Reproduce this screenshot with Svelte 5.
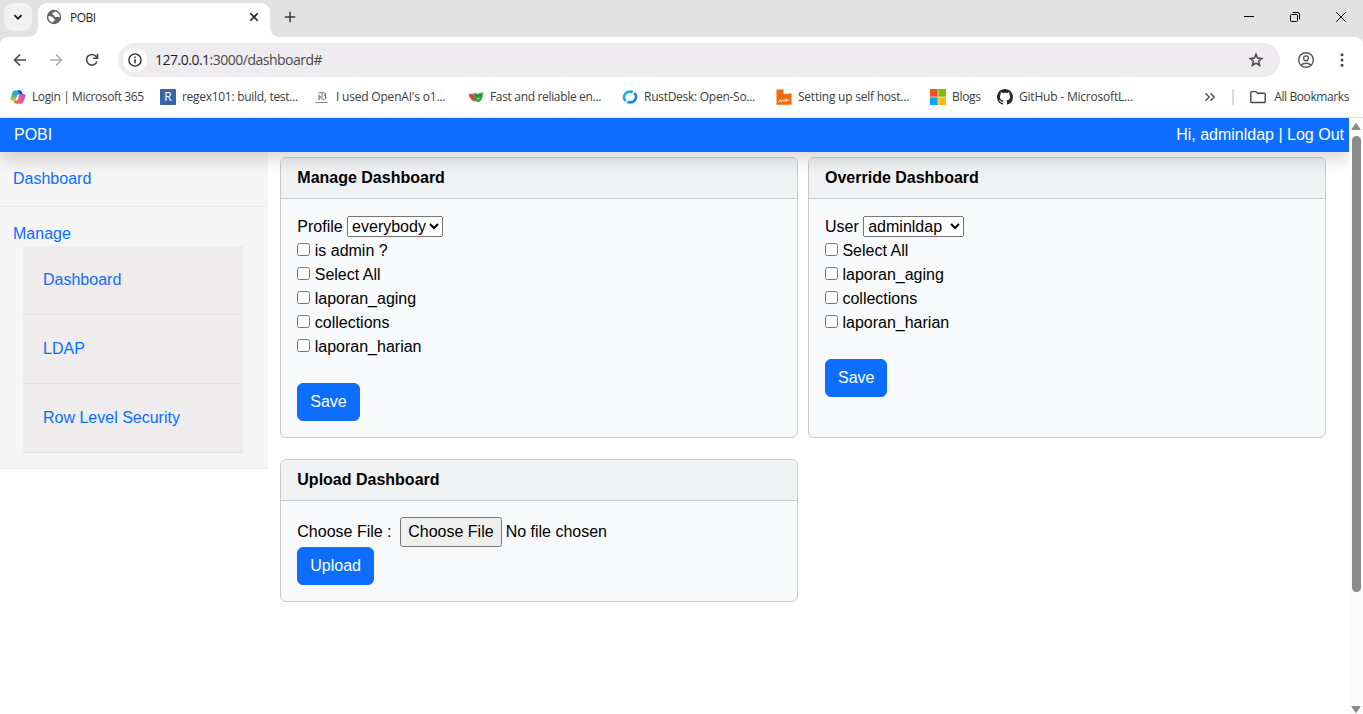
<script>
  const bookmarks = [
    { icon: 'copilot', label: 'Login | Microsoft 365', width: 150, spacing: -0.39 },
    { icon: 'regex', label: 'regex101: build, test...', width: 154, spacing: -0.29 },
    { icon: 'medium', label: "I used OpenAI's o1...", width: 154, spacing: -0.2 },
    { icon: 'masks', label: 'Fast and reliable en...', width: 154, spacing: -0.33 },
    { icon: 'rustdesk', label: 'RustDesk: Open-So...', width: 154, spacing: -0.27 },
    { icon: 'orange', label: 'Setting up self host...', width: 154, spacing: -0.23 },
    { icon: 'microsoft', label: 'Blogs', width: 67, spacing: -0.3 },
    { icon: 'github', label: 'GitHub - MicrosoftL...', width: 160, spacing: -0.2 }
  ];
  const submenu = ['Dashboard', 'LDAP', 'Row Level Security'];
  const profileOptions = ['is admin ?', 'Select All', 'laporan_aging', 'collections', 'laporan_harian'];
  const userOptions = ['Select All', 'laporan_aging', 'collections', 'laporan_harian'];
</script>

<div class="window">
  <header class="chrome">
    <div class="tabstrip">
      <button class="tabsearch" aria-label="Search tabs">
        <svg width="28" height="28" viewBox="0 0 28 28"><path d="M10.400 12.200l3.600 3.500 3.600-3.500" fill="none" stroke="#1f1f1f" stroke-width="1.800" /></svg>
      </button>
      <div class="tab">
        <svg class="globe" width="16" height="16" viewBox="0 0 16 16">
          <circle cx="8" cy="8" r="7.200" fill="#5f6368" />
          <path d="M9.300 2.200c-.4 1.300-2.700 1.200-3 2.500-.2 1.100.9 1.300 1.600 1.500.8.300.4 1.600 1.400 1.900.9.200 1.500-.7 2.600-.4.800.2 1 .8 1.900.8 0-3.200-1.700-5.400-4.500-6.300z" fill="#fff" />
          <path d="M2.200 7.300c1.600-.1 3.400-.1 4.500.7.8.7.5 1.500 1.400 1.800 1.100.4 1 1.200.4 1.900-.6.600-1.500.4-1.700 1.900-2.900-.8-4.700-3.200-4.600-6.300z" fill="#fff" />
        </svg>
        <span class="tabtitle">POBI</span>
        <svg class="tabclose" width="16" height="16" viewBox="0 0 16 16"><path d="M4.300 4.300l7.400 7.400M11.700 4.300l-7.400 7.400" stroke="#1f1f1f" stroke-width="1.600" /></svg>
      </div>
      <svg class="newtab" width="14" height="14" viewBox="0 0 14 14"><path d="M7 1.800v10.400M1.800 7h10.400" stroke="#3c3c3c" stroke-width="1.500" /></svg>
      <div class="winctl">
        <svg width="46" height="34" viewBox="0 0 46 34"><path d="M18 16.500h10" stroke="#000" /></svg>
        <svg width="46" height="34" viewBox="0 0 46 34" fill="none" stroke="#000"><rect x="18.500" y="14.500" width="7" height="7" rx="1.200" /><path d="M20.500 12.500h5.200a1.800 1.800 0 0 1 1.800 1.800v5.200" /></svg>
        <svg width="46" height="34" viewBox="0 0 46 34"><path d="M18.200 12.200l9.600 9.600M27.800 12.200l-9.600 9.600" stroke="#000" /></svg>
      </div>
    </div>

    <div class="toolbar">
      <svg class="nav" width="36" height="34" viewBox="0 0 36 34" fill="none" stroke="#474747" stroke-width="1.600"><path d="M26 17H15M20 11.500L14.500 17l5.500 5.500" /></svg>
      <svg class="nav" width="36" height="34" viewBox="0 0 36 34" fill="none" stroke="#ababab" stroke-width="1.600"><path d="M14 17h11M20 11.500l5.500 5.500-5.500 5.500" /></svg>
      <svg class="nav" width="36" height="34" viewBox="0 0 36 34" fill="none" stroke="#474747" stroke-width="1.600"><path d="M24.900 18.400a5.300 5.300 0 1 1-1.200-5.300l1.500 1.500" /><path d="M25.500 10.800v4.400h-4.400" /></svg>
      <div class="omnibox">
        <div class="info">
          <svg width="14" height="14" viewBox="0 0 14 14"><circle cx="7" cy="7" r="6.100" fill="none" stroke="#2c2c2c" stroke-width="1.400" /><path d="M7 6.200v4M7 3.600v1.500" stroke="#2c2c2c" stroke-width="1.500" /></svg>
        </div>
        <span class="url"><b>127.0.0.1</b>:3000/dashboard#</span>
        <svg class="star" width="16" height="16" viewBox="0 0 16 16"><path d="M8 2.200l1.600 3.900 4.200.4-3.200 2.800 1 4.100L8 11.200l-3.600 2.200 1-4.100-3.200-2.800 4.200-.4z" fill="none" stroke="#474747" stroke-width="1.500" /></svg>
      </div>
      <svg class="avatar" width="18" height="18" viewBox="0 0 18 18" fill="none" stroke="#5a5a5a" stroke-width="1.400"><circle cx="9" cy="9" r="7.300" /><circle cx="9" cy="7.300" r="2.400" /><path d="M3.900 14.100c2.800-2.500 7.400-2.500 10.200 0" /></svg>
      <svg class="dots" width="4" height="16" viewBox="0 0 4 16" fill="#474747"><circle cx="2" cy="2.700" r="1.500" /><circle cx="2" cy="8" r="1.500" /><circle cx="2" cy="13.300" r="1.500" /></svg>
    </div>

    <div class="bookmarks">
      {#each bookmarks as b}
        <div class="bookmark" style="width: {b.width}px; letter-spacing: {b.spacing}px">
          <svg width="16" height="16" viewBox="0 0 16 16">
            {#if b.icon === 'copilot'}
              <defs>
                <linearGradient id="cpA" x1="0" y1="0" x2="0" y2="1"><stop offset="0" stop-color="#19a5e8" /><stop offset=".5" stop-color="#3cb6a0" /><stop offset="1" stop-color="#f5c324" /></linearGradient>
                <linearGradient id="cpB" x1="1" y1="0" x2="0" y2="1"><stop offset="0" stop-color="#a54ce0" /><stop offset=".5" stop-color="#ee5a98" /><stop offset="1" stop-color="#fb6a3a" /></linearGradient>
              </defs>
              <path d="M4.700 1.500h5.200c1.200 0 1.600.8 2 2l.5 1.500h-2.200c-1 0-1.500.6-1.800 1.500l-1.300 4c-.3 1-.9 1.500-2 1.500H2.500C.8 12 .2 10.800.7 9l1.700-5.500c.4-1.300 1.200-2 2.300-2z" fill="url(#cpA)" />
              <path d="M7.500 1.500h2.400c1.200 0 1.600.8 2 2l.5 1.500H9.500z" fill="#1748d8" />
              <path d="M11.300 14.700H6.100c-1.200 0-1.600-.8-2-2L3.600 12h1.800c1 0 1.700-.5 2-1.500l1.300-4C9 5.500 9.500 5 10.500 5h3c1.700 0 2.300 1.200 1.800 2.700l-1.700 5c-.4 1.300-1.200 2-2.300 2z" fill="url(#cpB)" />
              <path d="M7.400 6l1.900-.4-1.700 5.200-2 .2z" fill="#fff" />
            {:else if b.icon === 'regex'}
              <rect width="16" height="16" rx=".8" fill="#3467a8" />
              <text x="4.200" y="12.300" font-size="12" fill="#fff" font-family="Open Sans, sans-serif">R</text>
            {:else if b.icon === 'medium'}
              <path d="M1.500 13.500h12" stroke="#8a8a8a" />
              <path d="M4.500 4l4-.8M5 5.500v5.200M5 7.500c1.500-.8 2 .2 1.500 1.200S5 10.500 4 10.500M8.500 4c3-.8 3.500.8 1.500 2.500M8 4v7M10 6.500c3 0 2.500 4-1 4.200M11.500 4v6" fill="none" stroke="#666" stroke-width=".9" />
            {:else if b.icon === 'masks'}
              <path d="M.8 4.500c2 .7 4 .7 7.200-.2v8c-1.600.2-3.500-.4-4.600-1.800C1.700 9 .8 6.500.8 4.500z" fill="#d65348" />
              <path d="M6.200 4.300c3 .8 5.800.3 8.600-1 .4 3.500-.3 6.400-2.100 8.400-1.500 1.600-3.600 1.700-4.900.4C6.400 10.700 5.900 7.300 6.200 4.300z" fill="#2fa43a" />
              <path d="M8.300 9.200c1.500.5 2.700.2 3.900-.7-.4 1.700-3.100 2.400-3.900.7z" fill="#d5efd6" />
              <path d="M7.700 6.900l1.600-.3M11.300 6.200l1.500-.5" stroke="#16611f" />
              <path d="M2.500 7l1.600.1M3.900 9.700l1.600-.9" stroke="#8d2b23" />
            {:else if b.icon === 'rustdesk'}
              <path d="M3.700 12.100A5.500 5.500 0 0 1 9 2.900" fill="none" stroke="#14b0f5" stroke-width="2.500" />
              <path d="M12.300 3.900A5.500 5.500 0 0 1 7 13.100" fill="none" stroke="#0a7df2" stroke-width="2.500" />
              <path d="M8 1.200l3.600.9-2.200 2.700zM8 14.800l-3.600-.9 2.200-2.700z" fill="#1296f4" />
            {:else if b.icon === 'orange'}
              <path d="M.5.500h7v4.800l8-1.100v11.500H.5z" fill="#f76707" />
              <path d="M2 13.500l2.200-2.800.8 2.500 1.700-2.500 1 2.300L10 9.500l.2 3 2.100-2 1 1.500" fill="none" stroke="#fff" stroke-width=".8" />
            {:else if b.icon === 'microsoft'}
              <rect width="7.700" height="7.700" fill="#f35325" /><rect x="8.300" width="7.700" height="7.700" fill="#81bc06" /><rect y="8.300" width="7.700" height="7.700" fill="#05a6f0" /><rect x="8.300" y="8.300" width="7.700" height="7.700" fill="#ffba08" />
            {:else}
              <path fill="#24292f" d="M8 0C3.580 0 0 3.580 0 8c0 3.540 2.290 6.530 5.470 7.590.4.070.55-.17.55-.38 0-.19-.01-.82-.01-1.490-2.010.37-2.530-.49-2.690-.94-.09-.23-.48-.94-.82-1.130-.28-.15-.68-.52-.01-.53.63-.01 1.080.58 1.230.82.72 1.210 1.870.87 2.330.66.07-.52.28-.87.51-1.070-1.780-.2-3.640-.89-3.640-3.950 0-.87.31-1.590.82-2.150-.08-.2-.36-1.020.08-2.120 0 0 .67-.21 2.200.82.64-.18 1.320-.27 2-.27s1.360.09 2 .27c1.530-1.040 2.200-.82 2.200-.82.44 1.100.16 1.920.08 2.120.51.56.82 1.270.82 2.150 0 3.070-1.870 3.750-3.650 3.950.29.25.54.73.54 1.480 0 1.070-.01 1.930-.01 2.200 0 .21.15.46.55.38A8.010 8.010 0 0 0 16 8c0-4.420-3.580-8-8-8z" />
            {/if}
          </svg>
          <span>{b.label}</span>
        </div>
      {/each}
      <div class="allmarks">
        <svg width="12" height="12" viewBox="0 0 12 12" fill="none" stroke="#474747" stroke-width="1.300"><path d="M1.500 2.300L5.200 6 1.500 9.700M6.500 2.300L10.200 6 6.500 9.700" /></svg>
        <i class="sep"></i>
        <svg width="16" height="16" viewBox="0 0 16 16" fill="none" stroke="#474747" stroke-width="1.400"><path d="M.8 3.400c0-.5.300-.8.800-.8h4.200l1.700 1.700h6.900c.5 0 .8.300.8.800v7.600c0 .5-.3.800-.8.800H1.600c-.5 0-.8-.3-.8-.8z" /></svg>
        <span>All Bookmarks</span>
      </div>
    </div>
  </header>

  <div class="viewport">
    <div class="page">
      <nav class="topbar">
        <span>POBI</span>
        <span>Hi, adminldap | Log Out</span>
      </nav>
      <div class="content">
        <ul class="sidebar">
          <li><a href="#top">Dashboard</a></li>
          <li>
            <a href="#top">Manage</a>
            <ul>
              {#each submenu as item}<li><a href="#top">{item}</a></li>{/each}
            </ul>
          </li>
        </ul>
        <main>
          <section class="card">
            <h6>Manage Dashboard</h6>
            <div class="body">
              <div class="row">Profile <select><option>everybody</option></select></div>
              {#each profileOptions as o}<label class="row"><input type="checkbox" /> {o}</label>{/each}
              <button class="btn spaced">Save</button>
            </div>
          </section>
          <section class="card">
            <h6>Override Dashboard</h6>
            <div class="body">
              <div class="row">User <select class="user"><option>adminldap</option></select></div>
              {#each userOptions as o}<label class="row"><input type="checkbox" /> {o}</label>{/each}
              <button class="btn spaced">Save</button>
            </div>
          </section>
          <section class="card">
            <h6>Upload Dashboard</h6>
            <div class="body">
              <div class="filerow"><span>Choose File :</span><input type="file" /></div>
              <button class="btn">Upload</button>
            </div>
          </section>
        </main>
      </div>
    </div>
    <div class="scrollbar">
      <svg width="10" height="7" viewBox="0 0 10 7"><path d="M5 .4L9.200 6.500H.8z" fill="#8b8b8b" stroke="#8b8b8b" stroke-linejoin="round" /></svg>
      <div class="thumb"></div>
      <svg class="down" width="10" height="7" viewBox="0 0 10 7"><path d="M5 6.500L9.200.5H.8z" fill="#8b8b8b" stroke="#8b8b8b" stroke-linejoin="round" /></svg>
    </div>
  </div>
</div>

<style>
  :global(body) { margin: 0; overflow: hidden; }
  * { box-sizing: border-box; }
  svg { display: block; flex: none; }
  .window { width: 1363px; height: 714px; display: flex; flex-direction: column; overflow: hidden; background: #fff; }
  .chrome { flex: none; height: 118px; background: #e2e2e2; font: 12px/16px 'Open Sans', sans-serif; color: #3c3c3c; border-bottom: 1px solid #dfe1e5; }
  .tabstrip { height: 37px; display: flex; align-items: flex-start; padding: 3px 0 0 4px; }
  .tabsearch { width: 28px; height: 28px; padding: 0; border: 0; border-radius: 9px; background: #f1f1f1; }
  .tab { position: relative; width: 232px; height: 34px; margin-left: 6px; padding: 0 8px 6px; display: flex; align-items: center; background: #fff; border-radius: 9px 9px 0 0; }
  .tab::before, .tab::after { content: ''; position: absolute; bottom: 0; width: 9px; height: 9px; }
  .tab::before { left: -9px; background: radial-gradient(circle at 0 0, transparent 8.500px, #fff 9px); }
  .tab::after { right: -9px; background: radial-gradient(circle at 100% 0, transparent 8.500px, #fff 9px); }
  .tabtitle { margin: 1px 0 0 8px; color: #1f1f1f; letter-spacing: -0.500px; }
  .tabclose { margin-left: auto; }
  .newtab { margin: 7px 0 0 13px; }
  .winctl { margin: -3px -1px 0 auto; display: flex; }
  .toolbar { height: 46px; display: flex; align-items: center; background: #fff; border-radius: 8px 8px 0 0; }
  .omnibox { width: 1162px; height: 34px; margin-left: 10px; display: flex; align-items: center; border-radius: 17px; background: #eeecee; padding: 0 16px 0 5px; }
  .info { width: 24px; height: 24px; border-radius: 50%; background: #fff; display: flex; align-items: center; justify-content: center; }
  .url { margin-left: 8px; font-size: 14px; line-height: 20px; letter-spacing: -0.500px; color: #4a4a4a; }
  .url b { font-weight: 400; color: #1f1f1f; }
  .star { margin-left: auto; }
  .avatar { margin-left: 17px; }
  .dots { margin-left: 25px; }
  .bookmarks { height: 34px; display: flex; align-items: center; background: #fff; padding: 0 14px 6px 10px; }
  .bookmark { display: flex; align-items: center; gap: 6px; flex: none; white-space: nowrap; }
  .allmarks { margin-left: auto; display: flex; align-items: center; white-space: nowrap; letter-spacing: -0.400px; }
  .sep { width: 2px; height: 16px; margin: 0 16px; background: #dcdcdc; }
  .allmarks span { margin-left: 8px; }

  .viewport { flex: 1; min-height: 0; display: flex; font: 16px/24px 'Liberation Sans', Arial, sans-serif; color: #000; }
  .page { width: 1349px; overflow: hidden; }
  .topbar { position: relative; z-index: 1; height: 34px; display: flex; justify-content: space-between; padding: 5px 5px 0 14px; background: #0d6efd; color: #fff; box-shadow: 0 8px 16px rgba(0, 0, 0, .15); }
  .content { display: flex; align-items: flex-start; }
  ul { list-style: none; margin: 0; padding: 0; }
  a { color: #0d6efd; text-decoration: none; display: block; }
  .sidebar { width: 268px; background: #f5f5f5; }
  .sidebar > li { padding: 15px 25px 15px 13px; border-bottom: 1px solid #ebebeb; }
  .sidebar ul { width: 220px; margin-left: 10px; background: #eeecec; }
  .sidebar ul li { padding: 22px 20px; border-bottom: 1px solid #e4e2e2; }
  main { margin-left: 12.300px; padding-top: 5px; display: grid; grid-template-columns: 517.700px 517.900px; gap: 21px 10px; }
  .card { border: 1px solid #c8cbce; border-radius: 6px; background: #f8f9fb; overflow: hidden; }
  h6 { margin: 0; padding: 8px 16px; font-size: 16px; line-height: 24px; font-weight: 700; background: #f0f1f3; border-bottom: 1px solid #c8cbce; }
  .body { padding: 16px; }
  .row { display: block; height: 24px; white-space: pre; }
  select { font: inherit; line-height: inherit; margin: 0; width: 96px; color: #000; height: 21px; }
  select.user { width: 101px; }
  input { margin: 0; font: inherit; }
  input::file-selector-button { height: 30px; font: inherit; }
  .btn { display: block; border: 1px solid #0d6efd; border-radius: 6px; background: #0d6efd; color: #fff; padding: 6px 12px; font: inherit; }
  .spaced { margin-top: 24px; }
  .filerow { display: flex; height: 30px; align-items: center; gap: 8.700px; }
  .scrollbar { width: 14px; background: #fcfcfc; display: flex; flex-direction: column; align-items: center; padding: 5px 0 1px; }
  .thumb { width: 9px; height: 456px; margin-top: 6px; border-radius: 5px; background: #8b8b8b; }
  .down { margin-top: auto; }
</style>
